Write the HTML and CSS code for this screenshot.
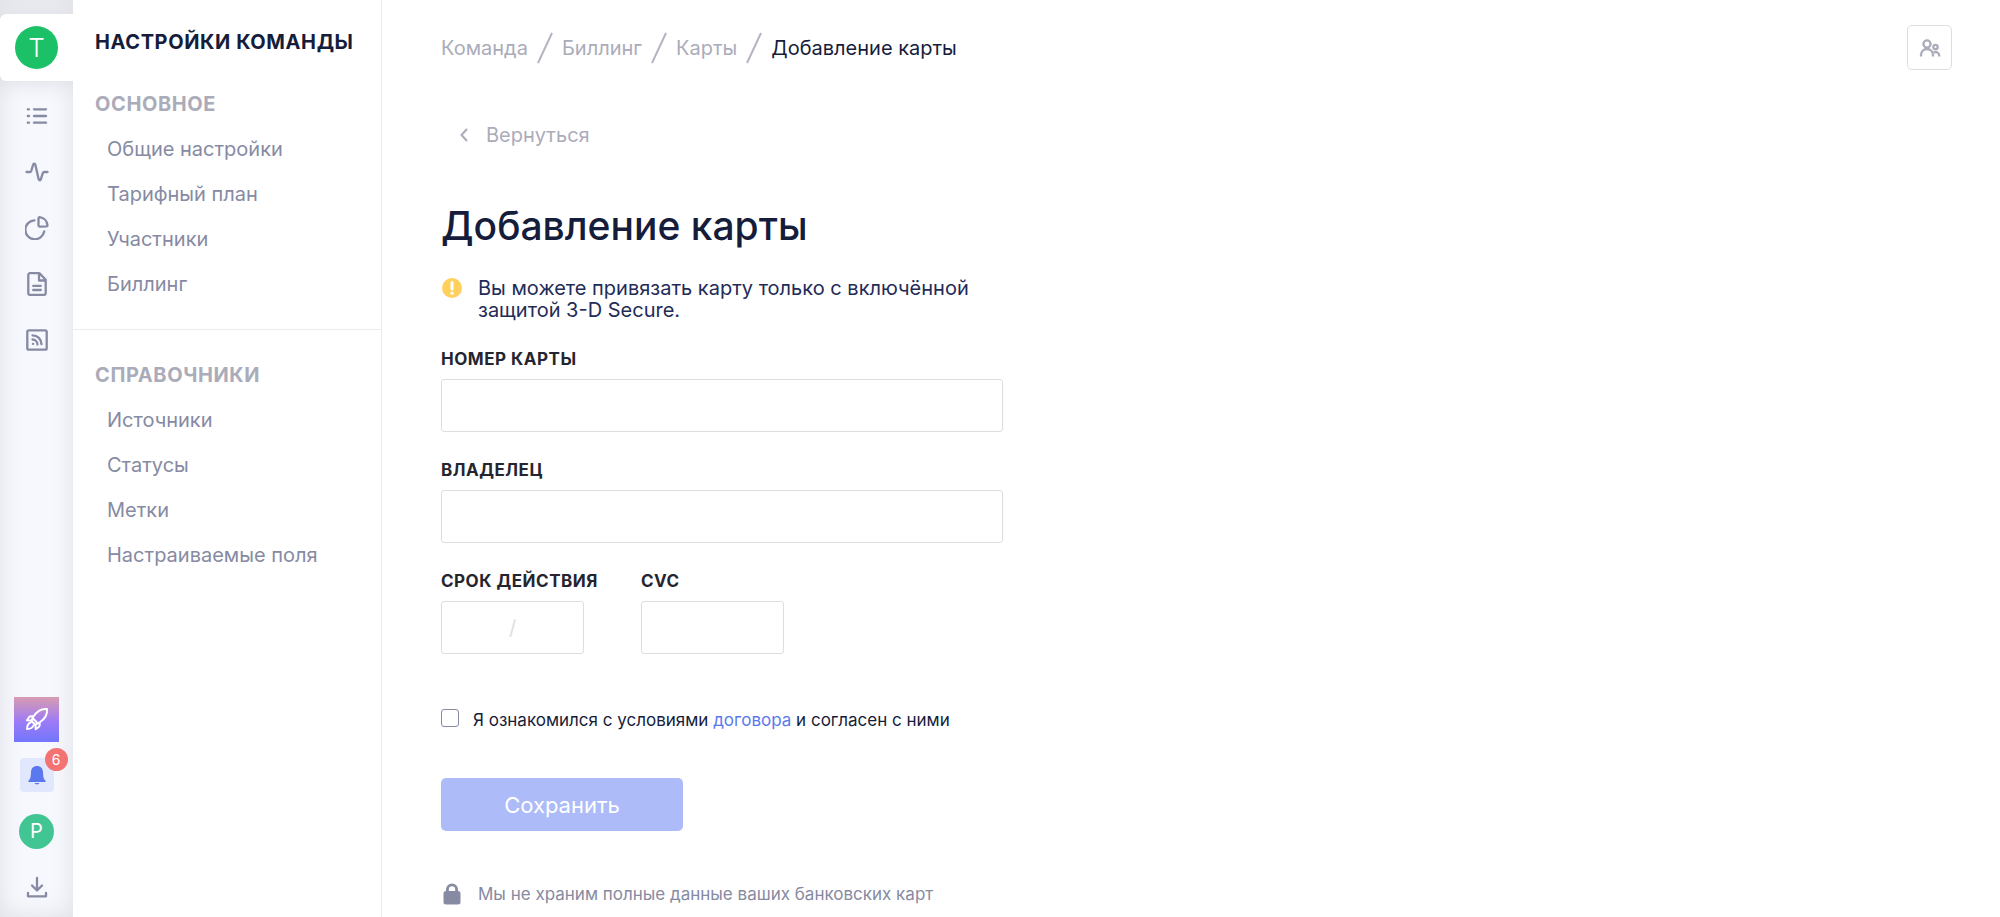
FILE: index.html
```html
<!DOCTYPE html>
<html lang="ru">
<head>
    <meta charset="UTF-8">
    <meta name="viewport" content="width=device-width, initial-scale=1.0">
    <title>Добавление карты</title>
    <link rel="stylesheet" href="styles.css">
</head>
<body>

    <!-- Icon rail -->
    <nav class="rail">
        <a class="rail-team" href="#team"><span class="avatar avatar-team">T</span></a>
        <a class="rail-item" href="#tasks" aria-label="Задачи">
            <svg class="icon" viewBox="0 0 24 24"><path d="M9 5.300h12M9 12h12M9 18.700h12M2.800 5.300h1.200M2.800 12h1.200M2.800 18.700h1.200"/></svg>
        </a>
        <a class="rail-item" href="#activity" aria-label="Активность">
            <svg class="icon" viewBox="0 0 24 24"><path d="M1.500 12h3.300c.8 0 1.200-.4 1.500-1.200L8 5c.4-1.700 2-1.700 2.400 0l3.200 14c.4 1.700 1.800 1.700 2.300.2l1.900-6c.3-.8.8-1.200 1.600-1.200h3.100"/></svg>
        </a>
        <a class="rail-item" href="#reports" aria-label="Отчёты">
            <svg class="icon" viewBox="0 0 24 24"><path d="M9.500 4.300A9.500 9.500 0 1 0 19.200 15.500"/><path d="M13.500 2.200c0-.6.400-1 1-1 4.400.4 7.600 3.800 8 8.100 0 .7-.3 1.100-.9 1.100l-7.100.2c-.6 0-1-.4-1-1z"/></svg>
        </a>
        <a class="rail-item" href="#documents" aria-label="Документы">
            <svg class="icon" viewBox="0 0 24 24"><path d="M14.500 1.200H5a1.700 1.700 0 0 0-1.700 1.700v18.200A1.700 1.700 0 0 0 5 22.800h14a1.700 1.700 0 0 0 1.700-1.700V7.800zM14 1.500v7h6.500M8.200 13.800h7.600M8.200 18h7.600"/></svg>
        </a>
        <a class="rail-item" href="#feed" aria-label="Лента">
            <svg class="icon" viewBox="0 0 24 24"><rect x="2.300" y="2.300" width="19.400" height="19.400" rx="1.500"/><path d="M7.500 7.300a9 9 0 0 1 9 9M7.500 11.500a5 5 0 0 1 5 5M8 15.900h.1"/></svg>
        </a>

        <div class="rail-bottom">
            <a class="rail-item" href="#start" aria-label="Быстрый старт">
                <span class="rocket">
                    <svg class="icon" viewBox="0 0 24 24"><path d="M22 2c-6-.6-10 2-13.500 7.500L7.500 11l5.500 5.500 1.500-1C20 12 22.600 8 22 2zM8.500 9.300H6c-1 0-1.500.3-2 1l-2 3 5 .2M14.700 15.500V18c0 1-.3 1.500-1 2l-3 2.200-.2-5M7.500 11l-1 3 3.500 3.500 3-1M5.500 15.500c-2 .7-3.300 3-3.500 6.500 3.500 0 5.700-1.500 6.500-3.500"/></svg>
                </span>
            </a>
            <button class="rail-item" type="button" aria-label="Уведомления">
                <span class="bell">
                    <svg class="bell-icon" viewBox="0 0 20 20"><path d="M10 1C6.200 1 4.200 3.600 4 7c-.2 4-.3 6.300-2 8.200-.3.400-.8.800-.8 1.300 0 .3.200.5.600.5h16.400c.4 0 .6-.2.600-.5 0-.5-.5-.9-.8-1.300-1.700-1.900-1.800-4.200-2-8.200-.2-3.400-2.200-6-6-6zM7.500 18c.4.900 1.300 1.400 2.500 1.400s2.100-.5 2.500-1.400z"/></svg>
                    <span class="badge">6</span>
                </span>
            </button>
            <a class="rail-item" href="#profile"><span class="avatar avatar-user">P</span></a>
            <a class="rail-item" href="#download" aria-label="Скачать">
                <svg class="icon" viewBox="0 0 24 24"><path d="M12 3v12M7 10.500l5 5 5-5M3 18v3.300h18V18"/></svg>
            </a>
        </div>
    </nav>

    <!-- Team settings menu -->
    <aside class="sidebar">
        <h2 class="sidebar-title">Настройки команды</h2>
        <section class="menu">
            <h3 class="menu-title">Основное</h3>
            <a href="#general">Общие настройки</a>
            <a href="#plan">Тарифный план</a>
            <a href="#members">Участники</a>
            <a href="#billing">Биллинг</a>
        </section>
        <section class="menu menu-divided">
            <h3 class="menu-title">Справочники</h3>
            <a href="#sources">Источники</a>
            <a href="#statuses">Статусы</a>
            <a href="#labels">Метки</a>
            <a href="#fields">Настраиваемые поля</a>
        </section>
    </aside>

    <!-- Main content -->
    <main class="main">
        <header class="topbar">
            <nav class="breadcrumbs">
                <a href="#team">Команда</a>
                <svg class="slash" viewBox="0 0 16 32"><path d="M15 1L1 31"/></svg>
                <a href="#billing">Биллинг</a>
                <svg class="slash" viewBox="0 0 16 32"><path d="M15 1L1 31"/></svg>
                <a href="#cards">Карты</a>
                <svg class="slash" viewBox="0 0 16 32"><path d="M15 1L1 31"/></svg>
                <span class="current">Добавление карты</span>
            </nav>
            <button class="members" type="button" aria-label="Участники">
                <svg class="members-icon" viewBox="0 0 22 20"><circle cx="8" cy="6" r="3.600"/><path d="M2 18.500v-1.500a6 6 0 0 1 12 0v1.500"/><circle cx="16.500" cy="9" r="2.200"/><path d="M14.500 14.500c3-1.300 5.700.3 5.700 3v1"/></svg>
            </button>
        </header>

        <a class="back" href="#cards">
            <svg class="back-icon" viewBox="0 0 8 14"><path d="M7 1L1.500 7 7 13"/></svg>
            Вернуться
        </a>

        <h1>Добавление карты</h1>

        <form class="card-form">
            <p class="notice">
                <svg class="note-icon" viewBox="0 0 22 22"><circle cx="11" cy="11" r="10" fill="#ffd05c"/><path d="M11 5.500v6.500" stroke="#fff" stroke-width="3" stroke-linecap="round"/><circle cx="11" cy="16.200" r="1.600" fill="#fff"/></svg>
                <span>Вы можете привязать карту только с включённой защитой 3-D Secure.</span>
            </p>

            <div class="field">
                <label for="number">Номер карты</label>
                <input type="text" id="number">
            </div>
            <div class="field">
                <label for="owner">Владелец</label>
                <input type="text" id="owner">
            </div>
            <div class="field-row">
                <div class="field field-small">
                    <label for="expires">Срок действия</label>
                    <input type="text" id="expires" placeholder="/">
                </div>
                <div class="field field-small">
                    <label for="cvc">CVC</label>
                    <input type="text" id="cvc">
                </div>
            </div>

            <div class="agree">
                <input type="checkbox" id="agree">
                <label for="agree">Я ознакомился с условиями <a href="#contract">договора</a> и согласен с ними</label>
            </div>

            <button class="submit" type="submit" disabled>Сохранить</button>

            <p class="secure">
                <svg class="note-icon" viewBox="0 0 22 22"><path d="M5 8V6.500a6 6 0 0 1 12 0V8a2.500 2.500 0 0 1 2.500 2.500v8.500a2.500 2.500 0 0 1-2.500 2.500H5a2.500 2.500 0 0 1-2.500-2.500v-8.500A2.500 2.500 0 0 1 5 8zm2.800 0h6.400V6.500a3.200 3.200 0 0 0-6.400 0z" fill="#868aa2"/></svg>
                <span>Мы не храним полные данные ваших банковских карт</span>
            </p>
        </form>
    </main>

</body>
</html>
```
FILE: styles.css
```css
* {
    margin: 0;
    padding: 0;
    box-sizing: border-box;
}

body {
    display: flex;
    min-height: 100vh;
    font-family: Inter, "Liberation Sans", sans-serif;
    font-size: 20px;
    line-height: 24px;
    color: #161d3b;
    background-color: #fff;
}

a {
    color: inherit;
    text-decoration: none;
}

button, input {
    font: inherit;
}

/* Icon rail */
.rail {
    display: flex;
    flex-direction: column;
    flex-shrink: 0;
    width: 73px;
    min-height: 100vh;
    padding-top: 14px;
    background-color: #f7f8fe;
    box-shadow: inset 0 0 24px rgba(0, 0, 0, 0.1);
}

.rail-team {
    display: flex;
    align-items: center;
    justify-content: center;
    height: 67px;
    margin-bottom: 7px;
    border-radius: 6px 0 0 6px;
    background-color: #fff;
    box-shadow: 0 0 24px rgba(0, 0, 0, 0.12);
    clip-path: inset(-14px 0 -40px 0);
}

.rail-item {
    display: flex;
    align-items: center;
    justify-content: center;
    width: 100%;
    height: 56px;
    border: none;
    background: none;
}

.rail-bottom {
    margin-top: auto;
    padding-bottom: 2px;
}

.icon {
    width: 24px;
    height: 24px;
    fill: none;
    stroke: #868aa2;
    stroke-width: 2.3;
    stroke-linecap: round;
    stroke-linejoin: round;
}

.avatar {
    display: flex;
    align-items: center;
    justify-content: center;
    border-radius: 50%;
    color: #fff;
}

.avatar-team {
    width: 43px;
    height: 43px;
    font-size: 26px;
    font-weight: 300;
    background-color: #1cc066;
}

.avatar-user {
    width: 35px;
    height: 35px;
    background-color: #40c593;
}

.rocket {
    display: flex;
    align-items: center;
    justify-content: center;
    width: 45px;
    height: 45px;
    background: linear-gradient(#d89bb0, #9c7bf7 55%, #7276fb);
}

.rocket .icon {
    stroke: #fff;
    stroke-width: 2;
}

.bell {
    position: relative;
    display: flex;
    align-items: center;
    justify-content: center;
    width: 34px;
    height: 34px;
    border-radius: 4px;
    background-color: #e1e7fd;
}

.bell-icon {
    width: 20px;
    height: 20px;
    fill: #5b78ef;
}

.badge {
    position: absolute;
    top: -10px;
    right: -14px;
    width: 23px;
    height: 23px;
    border-radius: 50%;
    font-size: 14px;
    line-height: 23px;
    text-align: center;
    color: #fff;
    background-color: #f37272;
}

/* Team settings menu */
.sidebar {
    flex-shrink: 0;
    width: 309px;
    padding-top: 30px;
    border-right: 1px solid #ececef;
}

.sidebar-title,
.menu-title {
    padding-left: 22px;
    font-size: 20px;
    font-weight: 700;
    letter-spacing: 0.03em;
    text-transform: uppercase;
}

.menu {
    padding: 38px 0 22px;
}

.menu-divided {
    padding-top: 33px;
    border-top: 1px solid #ececef;
}

.menu-title {
    margin-bottom: 11px;
    color: #abacba;
}

.menu a {
    display: block;
    padding-left: 34px;
    line-height: 45px;
    color: #868aa2;
}

/* Main content */
.main {
    flex: 1;
    padding: 25px 48px 0 59px;
}

.topbar {
    display: flex;
    align-items: center;
    justify-content: space-between;
}

.breadcrumbs {
    display: flex;
    align-items: center;
    gap: 9px;
    color: #abacba;
}

.breadcrumbs .current {
    color: #161d3b;
}

.slash {
    width: 16px;
    height: 32px;
    fill: none;
    stroke: #b4b5c1;
    stroke-width: 2;
}

.members {
    display: flex;
    align-items: center;
    justify-content: center;
    width: 45px;
    height: 45px;
    border: 1px solid #dedee2;
    border-radius: 5px;
    background-color: #fff;
}

.members-icon {
    width: 22px;
    height: 20px;
    fill: none;
    stroke: #abacba;
    stroke-width: 2.3;
}

.back {
    display: inline-flex;
    align-items: center;
    gap: 18px;
    margin-top: 53px;
    padding-left: 19px;
    color: #abacba;
}

.back-icon {
    width: 8px;
    height: 14px;
    fill: none;
    stroke: #abacba;
    stroke-width: 2;
}

h1 {
    margin-top: 55px;
    font-size: 39px;
    font-weight: 500;
    line-height: 48px;
}

.card-form {
    max-width: 562px;
    margin-top: 27px;
}

.notice,
.secure {
    display: flex;
    gap: 15px;
    line-height: 22px;
}

.notice {
    margin-bottom: 28px;
    color: #232b57;
}

.note-icon {
    flex-shrink: 0;
    width: 22px;
    height: 22px;
}

.field {
    margin-bottom: 28px;
}

.field label {
    display: block;
    margin-bottom: 9px;
    font-size: 17px;
    font-weight: 700;
    line-height: 21px;
    letter-spacing: 0.03em;
    text-transform: uppercase;
    white-space: nowrap;
    color: #25252f;
}

.field input {
    display: block;
    width: 100%;
    height: 53px;
    padding: 0 16px;
    border: 1px solid #dedee2;
    border-radius: 3px;
    color: #161d3b;
}

.field input::placeholder {
    color: #dedee2;
}

.field-row {
    display: flex;
    gap: 57px;
}

.field-small {
    width: 143px;
}

.field-small input {
    text-align: center;
}

.agree {
    display: flex;
    align-items: flex-start;
    gap: 14px;
    margin-top: 27px;
    font-size: 17px;
    line-height: 22px;
}

.agree input {
    appearance: none;
    width: 18px;
    height: 18px;
    border: 1px solid #868aa2;
    border-radius: 3px;
}

.agree a {
    color: #5b78ef;
}

.submit {
    display: block;
    width: 242px;
    height: 53px;
    margin-top: 47px;
    border: none;
    border-radius: 5px;
    font-size: 22px;
    color: #fff;
    background-color: #adbbf8;
}

.secure {
    margin-top: 52px;
    font-size: 17px;
    color: #868aa2;
}
```
